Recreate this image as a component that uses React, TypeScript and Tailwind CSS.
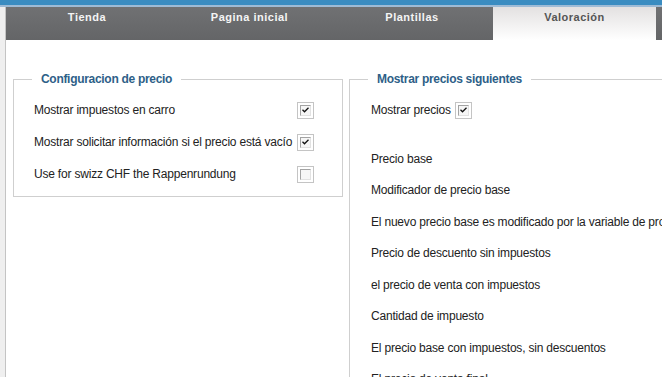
import React from "react";

const tabs = [
  { label: "Tienda", w: "w-[162px]" },
  { label: "Pagina inicial", w: "w-[163px]" },
  { label: "Plantillas", w: "w-[162px]" },
];

const priceRows = [
  "Precio base",
  "Modificador de precio base",
  "El nuevo precio base es modificado por la variable de producto",
  "Precio de descuento sin impuestos",
  "el precio de venta con impuestos",
  "Cantidad de impuesto",
  "El precio base con impuestos, sin descuentos",
  "El precio de venta final",
];

function Check({ checked }: { checked: boolean }) {
  return (
    <span className="flex h-[17px] w-[17px] shrink-0 items-center justify-center border border-[#c4c4c4] bg-white">
      <span className="flex h-[11px] w-[11px] items-center justify-center border-t border-l border-[#a3a3a3] border-r-[#e2e2e2] border-b-[#e2e2e2] border-r border-b bg-[#f6f6f6]">
        {checked ? (
          <svg width="7" height="6" viewBox="0 0 7 6">
            <path d="M0.5 2.8 L2.5 4.8 L6.5 0.8" stroke="#111" strokeWidth="1.3" fill="none" />
          </svg>
        ) : null}
      </span>
    </span>
  );
}

export default function App() {
  return (
    <div className="relative h-[377px] w-[662px] overflow-hidden bg-white font-['Liberation_Sans',Arial,sans-serif]">
      <div className="h-[5px] bg-[#3a8cc1]" />
      <div className="h-[2px] bg-[#9ebbd6]" />
      <div className="flex h-[370px]">
        <div className="w-[5px] shrink-0 bg-[#efefef]" />
        <div className="min-w-0 flex-1 border-l border-[#c4c4c4]">
          <div className="flex h-[33px] bg-gradient-to-b from-[#707173] to-[#646567]">
            {tabs.map((t) => (
              <div
                key={t.label}
                className={`${t.w} shrink-0 pt-[3px] text-center text-[11px] leading-[14px] font-bold tracking-[0.5px] text-[#f4f4f4]`}
              >
                {t.label}
              </div>
            ))}
            <div className="w-[163px] shrink-0 bg-gradient-to-b from-[#e3e1e1] to-white pt-[3px] text-center text-[11px] leading-[14px] font-bold tracking-[0.5px] text-[#555555]">
              Valoración
            </div>
          </div>

          <div className="flex pt-[32px] pl-[7px] text-[12px] tracking-[-0.2px] text-[#222222]">
            <fieldset className="h-[125px] w-[330px] shrink-0 border border-[#cfcfcf] pt-[8px] pl-[20px]">
              <legend className="ml-[-2px] px-[9px] text-[12px] leading-[14px] font-bold tracking-[-0.3px] text-[#2e5f88]">
                Configuracion de precio
              </legend>
              <div className="flex h-[32px] items-center">
                <span className="w-[263px] shrink-0 whitespace-nowrap">Mostrar impuestos en carro</span>
                <Check checked />
              </div>
              <div className="flex h-[32px] items-center">
                <span className="w-[263px] shrink-0 whitespace-nowrap">
                  Mostrar solicitar información si el precio está vacío
                </span>
                <Check checked />
              </div>
              <div className="flex h-[32px] items-center">
                <span className="w-[263px] shrink-0 whitespace-nowrap">Use for swizz CHF the Rappenrundung</span>
                <Check checked={false} />
              </div>
            </fieldset>

            <fieldset className="ml-[6px] h-[330px] w-[420px] shrink-0 border border-[#cfcfcf] pt-[8px] pl-[21px]">
              <legend className="ml-[-3px] px-[9px] text-[12px] leading-[14px] font-bold tracking-[-0.3px] text-[#2e5f88]">
                Mostrar precios siguientes
              </legend>
              <div className="flex h-[32px] items-center gap-[4px]">
                <span className="whitespace-nowrap">Mostrar precios</span>
                <Check checked />
              </div>
              <div className="mt-[17px]">
                {priceRows.map((r) => (
                  <div key={r} className="flex h-[31.5px] items-center whitespace-nowrap">
                    {r}
                  </div>
                ))}
              </div>
            </fieldset>
          </div>
        </div>
      </div>
    </div>
  );
}
